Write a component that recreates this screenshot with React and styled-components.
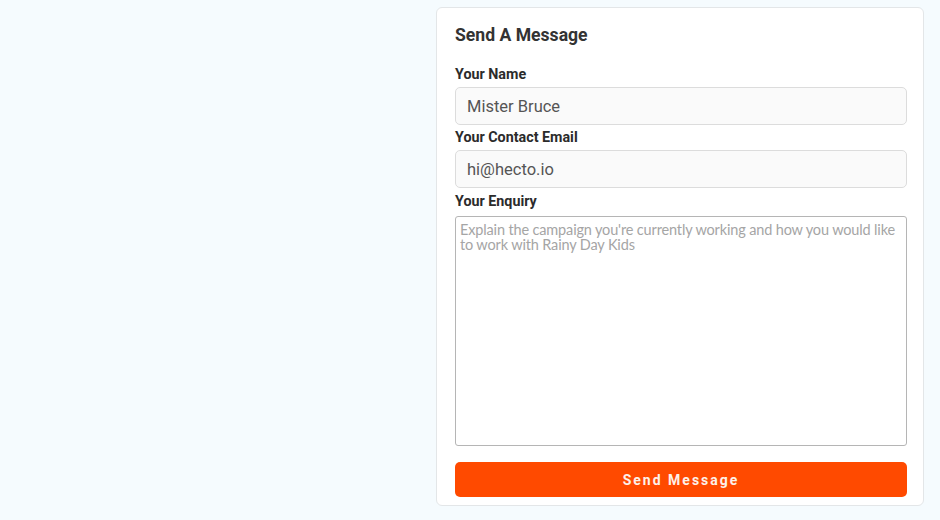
import React from "react";
import styled, { createGlobalStyle } from "styled-components";

const GlobalStyle = createGlobalStyle`
  html, body {
    margin: 0;
    padding: 0;
    background: #f5fbfe;
  }
  * {
    box-sizing: border-box;
  }
`;

const Page = styled.div`
  width: 940px;
  height: 520px;
  display: grid;
  grid-template-columns: 1fr 488px;
  padding: 7px 16px 14px 0;
  background: #f5fbfe;
`;

const Card = styled.form`
  background: #ffffff;
  border: 1px solid #e3e6e8;
  border-radius: 6px;
  padding: 14px 16px 8px 18px;
  display: flex;
  flex-direction: column;
`;

const Heading = styled.h2`
  margin: 0 0 18px;
  font-family: "Roboto", "Liberation Sans", sans-serif;
  font-weight: 700;
  font-size: 17.6px;
  line-height: 26px;
  color: #333333;
`;

const Label = styled.label`
  display: block;
  font-family: "Roboto", "Liberation Sans", sans-serif;
  font-weight: 700;
  font-size: 14.3px;
  line-height: 16px;
  color: #2b2b2b;
  margin-bottom: ${(p) => p.$space || 5}px;
`;

const Field = styled.div`
  display: flex;
  flex-direction: column;
  margin-bottom: ${(p) => p.$gap || 4}px;
`;

const Input = styled.input`
  height: 38px;
  width: 100%;
  padding: 0 11px;
  border: 1px solid #dcdcdc;
  border-radius: 5px;
  background: #fafafa;
  font-family: "Roboto", "Liberation Sans", sans-serif;
  font-size: 16.5px;
  color: #555555;
  outline: none;
`;

const TextArea = styled.textarea`
  height: 230px;
  width: 100%;
  padding: 5px 4px;
  border: 1px solid #b5b5b5;
  border-radius: 3px;
  background: #ffffff;
  font-family: "Lato", "Liberation Sans", sans-serif;
  font-size: 14.5px;
  letter-spacing: -0.15px;
  line-height: 15px;
  resize: none;
  outline: none;

  &::placeholder {
    color: #a5a5a5;
  }
`;

const Button = styled.button`
  height: 35px;
  width: 100%;
  border: none;
  border-radius: 5px;
  background: #ff4a00;
  color: #fdf1ea;
  font-family: "Roboto", "Liberation Sans", sans-serif;
  font-weight: 700;
  font-size: 14px;
  letter-spacing: 2px;
  cursor: pointer;
`;

export default function App() {
  return (
    <>
      <GlobalStyle />
      <Page>
        <div />
        <Card onSubmit={(e) => e.preventDefault()}>
          <Heading>Send A Message</Heading>
          <Field $gap={4}>
            <Label>Your Name</Label>
            <Input defaultValue="Mister Bruce" />
          </Field>
          <Field $gap={5}>
            <Label>Your Contact Email</Label>
            <Input defaultValue="hi@hecto.io" />
          </Field>
          <Field $gap={16}>
            <Label $space={7}>Your Enquiry</Label>
            <TextArea placeholder="Explain the campaign you're currently working and how you would like to work with Rainy Day Kids" />
          </Field>
          <Button type="submit">Send Message</Button>
        </Card>
      </Page>
    </>
  );
}
